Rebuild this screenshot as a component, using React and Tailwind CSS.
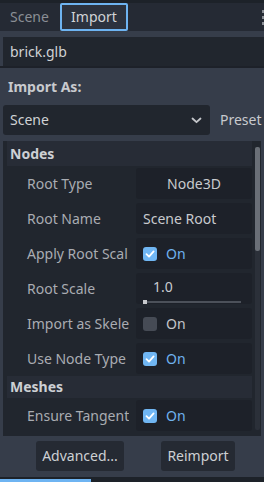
import React from 'react';

// Godot-style Import dock: tabs, file field, "Import As" select, inspector list, action buttons.

function Check({ on }) {
  return on ? (
    <span className="w-[14px] h-[14px] rounded-[3px] bg-[#70b6f3] flex items-center justify-center">
      <svg width="10" height="10" viewBox="0 0 10 10">
        <path d="M1.5 5.2 L4 7.6 L8.6 2.4" stroke="#fff" strokeWidth="1.8" fill="none" strokeLinecap="round" strokeLinejoin="round" />
      </svg>
    </span>
  ) : (
    <span className="w-[14px] h-[14px] rounded-[3px] bg-[#464b55]" />
  );
}

function Row({ label, children }) {
  return (
    <div className="h-[35px] flex items-center">
      <div className="w-[122px] mr-[7px] pl-[20px] leading-[20px] text-[#a9acb2] whitespace-nowrap overflow-hidden">{label}</div>
      <div className="w-[116px] h-[31px] rounded-[3px] bg-[#1d2129] flex items-center">{children}</div>
    </div>
  );
}

function Toggle({ on }) {
  return (
    <div className="flex items-center pl-[7px] gap-[9px]">
      <Check on={on} />
      <span className={on ? 'text-[#6fb2ee]' : 'text-[#c4c6ca]'}>On</span>
    </div>
  );
}

function Section({ title, h }) {
  return (
    <div className={`${h} bg-[#272c36] flex items-center pl-[3px] font-bold text-[#cdd0d4]`}>{title}</div>
  );
}

export default function App() {
  return (
    <div className="w-[264px] h-[482px] bg-[#363d4a] flex flex-col overflow-hidden font-['Noto_Sans',sans-serif] text-[14px] leading-[20px]">
      <div className="h-[3px] bg-[#1d2229]" />
      <div className="h-[28px] bg-[#252a34] flex items-center">
        <span className="pl-[10px] w-[60px] text-[#8a8e95]">Scene</span>
        <span className="h-[28px] w-[68px] border-2 border-[#6eb4f2] rounded-[2px] bg-[#2c323e] flex items-center justify-center text-[#d2d4d7]">
          Import
        </span>
        <span className="ml-auto mr-[-1px] flex flex-col gap-[3px]">
          <span className="w-[3px] h-[3px] bg-[#8a8e95]" />
          <span className="w-[3px] h-[3px] bg-[#8a8e95]" />
          <span className="w-[3px] h-[3px] bg-[#8a8e95]" />
        </span>
      </div>
      <div className="h-[6px]" />
      <div className="ml-[3px] h-[29px] bg-[#21262e] flex items-center pl-[7px] text-[#d0d2d5]">brick.glb</div>
      <div className="h-[2px] bg-[#1d2129]" />
      <div className="h-[37px] flex items-center pl-[8px] font-bold text-[#c8cace]">Import As:</div>
      <div className="h-[30px] flex items-center">
        <div className="ml-[3px] w-[207px] h-[30px] bg-[#21262e] rounded-[3px] flex items-center pl-[7px] pr-[8px] text-[#d0d2d5]">
          <span>Scene</span>
          <svg className="ml-auto" width="11" height="7" viewBox="0 0 11 7">
            <path d="M1.5 1.5 L5.5 5.2 L9.5 1.5" stroke="#c4c6ca" strokeWidth="1.8" fill="none" strokeLinecap="round" strokeLinejoin="round" />
          </svg>
        </div>
        <span className="pl-[10px] text-[#c8cace] whitespace-nowrap">Preset</span>
      </div>
      <div className="h-[6px]" />
      <div className="mx-[3px] h-[295px] bg-[#21262e] flex pl-[4px]">
        <div className="w-[245px] flex flex-col">
          <Section title="Nodes" h="h-[25px]" />
          <Row label="Root Type">
            <span className="w-full text-center text-[#c8cace]">Node3D</span>
          </Row>
          <Row label="Root Name">
            <span className="pl-[7px] text-[#c8cace]">Scene Root</span>
          </Row>
          <Row label="Apply Root Scal">
            <Toggle on />
          </Row>
          <Row label="Root Scale">
            <div className="w-full flex flex-col pl-[7px] pr-[11px] pt-[2px]">
              <span className="pl-[10px] text-[#c8cace]">1.0</span>
              <div className="mt-[4px] h-[2px] bg-[#4c515a] relative">
                <span className="absolute left-0 top-[-1px] w-[4px] h-[4px] bg-[#c8cace]" />
              </div>
            </div>
          </Row>
          <Row label="Import as Skele">
            <Toggle />
          </Row>
          <Row label="Use Node Type">
            <Toggle on />
          </Row>
          <Section title="Meshes" h="h-[22px]" />
          <Row label="Ensure Tangent">
            <Toggle on />
          </Row>
        </div>
        <div className="ml-[3px] mt-[6px] mb-[6px] w-[5px] bg-[#2b3039] rounded-[2px] flex flex-col">
          <div className="h-[104px] bg-[#6a6f77] rounded-[2px]" />
        </div>
      </div>
      <div className="h-[5px]" />
      <div className="h-[30px] flex pl-[36px] gap-[37px]">
        <span className="w-[88px] h-[30px] rounded-[3px] bg-[#252a33] flex items-center justify-center text-[#cdd0d3]">Advanced...</span>
        <span className="w-[74px] h-[30px] rounded-[3px] bg-[#252a33] flex items-center justify-center text-[#cdd0d3]">Reimport</span>
      </div>
      <div className="h-[6px]" />
      <div className="h-[5px] bg-[#1d2229] flex items-end">
        <div className="w-[91px] h-[3px] bg-[#6eb4f2]" />
      </div>
    </div>
  );
}
